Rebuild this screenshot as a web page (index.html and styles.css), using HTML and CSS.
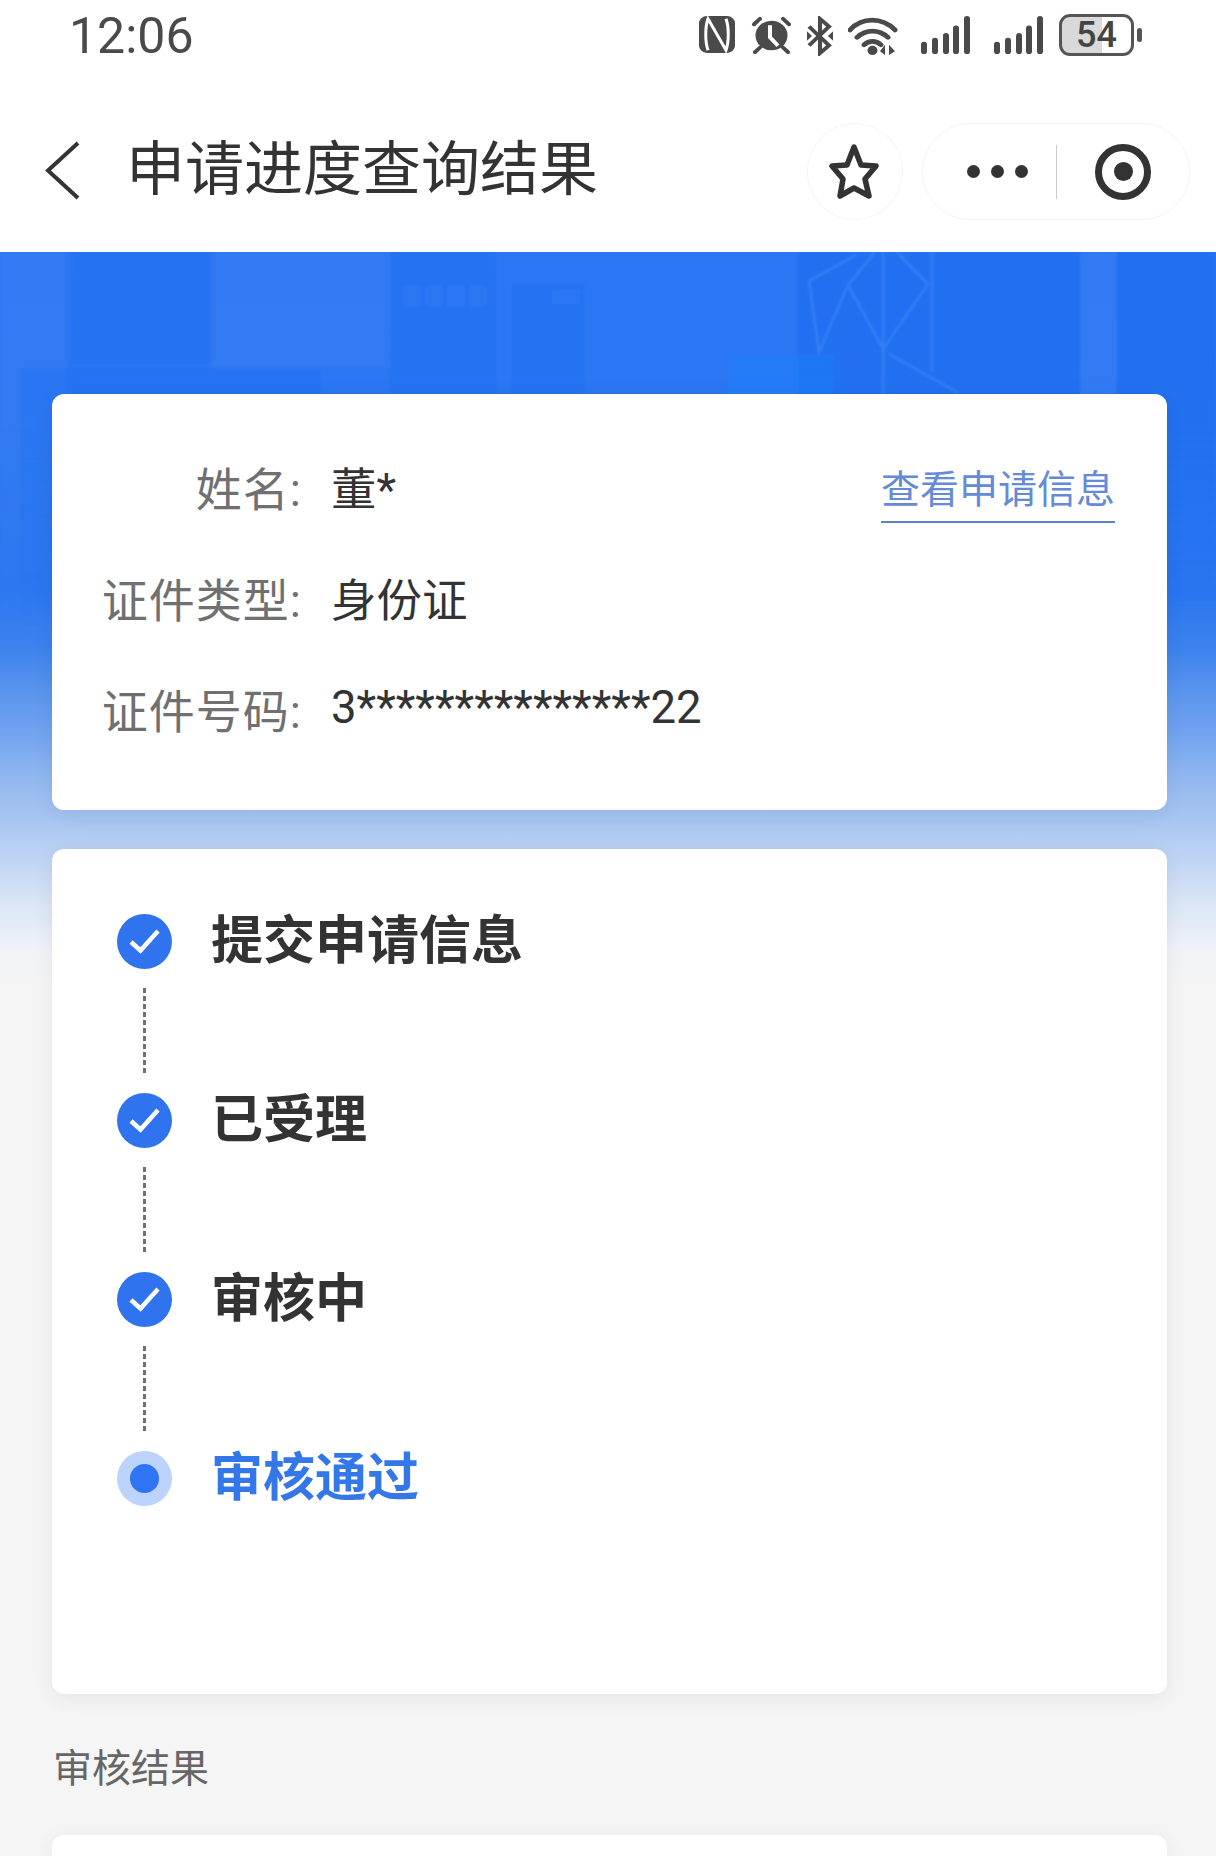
FILE: index.html
```html
<!DOCTYPE html>
<html lang="zh">
<head>
	<meta charset="utf-8" />
	<title>申请进度查询结果</title>
	<link rel="stylesheet" href="styles.css">
</head>
<body>
<div class="status">
	<span class="time">12:06</span>
	<div class="status-icons">
		<svg class="i-nfc" width="36" height="37" viewBox="0 0 36 40" preserveAspectRatio="none"><rect width="36" height="40" rx="8" fill="#4a4a4a"/><path d="M9 37C6 28 6 12 9 3L27 37C30 28 30 12 27 3" fill="none" stroke="#fff" stroke-width="3"/></svg>
		<svg class="i-alarm" width="41" height="38" viewBox="0 0 41 41" preserveAspectRatio="none"><circle cx="20.500" cy="21" r="16" fill="#4a4a4a"/><path d="M19 10V23L27 32" fill="none" stroke="#fff" stroke-width="4"/><path d="M3 9L9 3M38 9L32 3M9 34L4 39M32 34L37 39" stroke="#4a4a4a" stroke-width="4" stroke-linecap="round"/></svg>
		<svg class="i-bt" width="28" height="40" viewBox="0 0 28 42" preserveAspectRatio="none"><path d="M3 11L23 31L14 39V3L23 11L3 31" fill="none" stroke="#4a4a4a" stroke-width="4"/><path d="M1 16L6 21L1 26ZM27 16L22 21L27 26Z" fill="#4a4a4a"/></svg>
		<svg class="i-wifi" width="50" height="40" viewBox="0 0 50 43" preserveAspectRatio="none"><path d="M2 15C14 1 34 1 47 15M9 23C18 14 31 14 40 23M16 31C21 26 28 26 33 31" fill="none" stroke="#4a4a4a" stroke-width="5" stroke-linecap="round"/><circle cx="24.500" cy="37" r="5" fill="#4a4a4a"/><path d="M37 31V42L32 38ZM41 31V42L47 38Z" fill="#4a4a4a"/></svg>
		<svg class="i-signal" width="49" height="38" viewBox="0 0 49 40" preserveAspectRatio="none"><g fill="#4a4a4a"><rect x="0" y="27" width="6" height="13" rx="3"/><rect x="11" y="23" width="6" height="17" rx="3"/><rect x="22" y="18" width="6" height="22" rx="3"/><rect x="32" y="10" width="6" height="30" rx="3"/><rect x="43" y="0" width="6" height="40" rx="3"/></g></svg>
		<svg class="i-signal" width="49" height="38" viewBox="0 0 49 40" preserveAspectRatio="none"><g fill="#4a4a4a"><rect x="0" y="27" width="6" height="13" rx="3"/><rect x="11" y="23" width="6" height="17" rx="3"/><rect x="22" y="18" width="6" height="22" rx="3"/><rect x="32" y="10" width="6" height="30" rx="3"/><rect x="43" y="0" width="6" height="40" rx="3"/></g></svg>
		<div class="battery"><span>54</span></div>
	</div>
</div>

<div class="nav">
	<svg class="back" width="36" height="59" viewBox="0 0 36 59"><path d="M34 2L4 29.500L34 57" fill="none" stroke="#333" stroke-width="4"/></svg>
	<h1 class="title">申请进度查询结果</h1>
	<div class="nav-btns">
		<div class="fav">
			<svg width="60" height="64" viewBox="0 0 60 64"><path d="M29 7L36 25L51 26L40 39L44 56L29 48L15 56L18 39L7 26L22 25Z" fill="none" stroke="#333" stroke-width="5.500" stroke-linejoin="round"/></svg>
		</div>
		<div class="capsule">
			<div class="dots"><i></i><i></i><i></i></div>
			<div class="line"></div>
			<div class="target"><i></i></div>
		</div>
	</div>
</div>

<div class="main">
	<!-- 背景建筑 -->
	<svg class="deco" width="1216" height="400" viewBox="0 0 1216 400">
		<g fill="#fff" fill-opacity=".03">
			<rect x="0" y="0" width="66" height="400"/>
			<rect x="212" y="0" width="178" height="116"/>
			<rect x="403" y="33" width="18" height="22" rx="4"/>
			<rect x="425" y="33" width="18" height="22" rx="4"/>
			<rect x="447" y="33" width="18" height="22" rx="4"/>
			<rect x="469" y="33" width="18" height="22" rx="4"/>
			<rect x="552" y="38" width="28" height="14"/>
			<rect x="1081" y="0" width="36" height="400"/>
		</g>
		<g fill="#0a62f0" fill-opacity=".14">
			<rect x="72" y="0" width="138" height="112"/>
			<rect x="20" y="116" width="300" height="284"/>
			<rect x="390" y="0" width="106" height="400"/>
			<rect x="512" y="32" width="72" height="368"/>
		</g>
		<g fill="#0a62f0" fill-opacity=".3">
			<rect x="798" y="0" width="136" height="400"/>
			<rect x="934" y="0" width="146" height="400"/>
			<rect x="1117" y="0" width="99" height="400"/>
		</g>
		<rect x="728" y="103" width="105" height="39" fill="#1a86ff" fill-opacity=".35"/>
		<path d="M809 29L856 3M848 33L875 0M848 33L883 97M809 29L819 100L848 33M928 32L897 0M928 32L883 97M883 0V142M932 0V120M889 102L957 140" fill="none" stroke="#5a9bff" stroke-opacity=".32" stroke-width="3"/>
	</svg>

	<div class="card info">
		<div class="row">
			<span class="label">姓名:</span>
			<span class="val">董*</span>
			<a class="link" href="#">查看申请信息</a>
		</div>
		<div class="row">
			<span class="label">证件类型:</span>
			<span class="val">身份证</span>
		</div>
		<div class="row">
			<span class="label">证件号码:</span>
			<span class="val">3***************22</span>
		</div>
	</div>

	<div class="card steps">
		<div class="step">
			<svg class="dot" width="55" height="55" viewBox="0 0 55 55"><circle cx="27.500" cy="27.500" r="27.500" fill="#2f74ee"/><path d="M14 28L23.500 36.500L41 17" fill="none" stroke="#fff" stroke-width="4.500"/></svg>
			<span>提交申请信息</span>
		</div>
		<div class="dash"></div>
		<div class="step">
			<svg class="dot" width="55" height="55" viewBox="0 0 55 55"><circle cx="27.500" cy="27.500" r="27.500" fill="#2f74ee"/><path d="M14 28L23.500 36.500L41 17" fill="none" stroke="#fff" stroke-width="4.500"/></svg>
			<span>已受理</span>
		</div>
		<div class="dash"></div>
		<div class="step">
			<svg class="dot" width="55" height="55" viewBox="0 0 55 55"><circle cx="27.500" cy="27.500" r="27.500" fill="#2f74ee"/><path d="M14 28L23.500 36.500L41 17" fill="none" stroke="#fff" stroke-width="4.500"/></svg>
			<span>审核中</span>
		</div>
		<div class="dash"></div>
		<div class="step current">
			<div class="dot now"><i></i></div>
			<span>审核通过</span>
		</div>
	</div>

	<div class="sec-title">审核结果</div>
	<div class="card result"></div>
</div>
</body>
</html>
```

FILE: styles.css
```css
*{
margin:0;
padding:0;
box-sizing:border-box;
}
html,body{
width:1216px;
height:1856px;
overflow:hidden;
}
body{
background:#f5f5f5;
color:#333;
font-family:Roboto,"Noto Sans CJK SC",sans-serif;
}

/* 状态栏 */
.status{
height:80px;
background:#fff;
display:flex;
align-items:flex-start;
padding-left:69px;
}
.time{
font-size:50px;
line-height:72px;
color:#4a4a4a;
}
.status-icons{
margin-left:auto;
margin-right:82px;
margin-top:15px;
display:flex;
align-items:flex-start;
}
.status-icons svg{
display:block;
margin-top:1px;
}
.i-alarm{margin-left:16px;}
.i-bt{margin-left:14px;}
.i-wifi{margin-left:14px;}
.i-signal{margin-left:23px;}
.i-signal + .i-signal{margin-left:24px;}
.battery{
width:75px;
height:42px;
margin-left:16px;
margin-top:-1px;
border:3px solid #555;
border-radius:11px;
background:linear-gradient(to right,#d9d9d9 58%,#fff 58%);
position:relative;
display:flex;
align-items:center;
justify-content:center;
font-size:36px;
font-weight:500;
line-height:36px;
color:#444;
}
.battery:after{
content:"";
position:absolute;
right:-11px;
top:11px;
width:5px;
height:14px;
border-radius:3px;
background:#555;
}

/* 导航 */
.nav{
height:172px;
background:#fff;
display:flex;
align-items:flex-start;
padding-left:44px;
padding-right:26px;
}
.back{
margin-top:61px;
}
.title{
font-size:59px;
font-weight:400;
line-height:80px;
margin-left:46px;
margin-top:50px;
color:#333;
white-space:nowrap;
}
.nav-btns{
margin-left:auto;
margin-top:43px;
display:flex;
gap:19px;
}
.fav{
width:96px;
height:97px;
border:1px solid #f4f4f4;
border-radius:50%;
display:flex;
align-items:center;
justify-content:center;
}
.capsule{
width:268px;
height:97px;
border:1px solid #f4f4f4;
border-radius:49px;
display:flex;
align-items:center;
padding-left:44px;
}
.dots{
display:flex;
gap:11px;
}
.dots i{
width:13px;
height:13px;
border-radius:50%;
background:#333;
}
.line{
width:1px;
height:54px;
background:#ccc;
margin-left:28px;
}
.target{
width:56px;
height:56px;
margin-left:38px;
border:7px solid #333;
border-radius:50%;
display:flex;
align-items:center;
justify-content:center;
}
.target i{
width:19px;
height:19px;
border-radius:50%;
background:#333;
}

/* 内容 */
.main{
position:relative;
height:1604px;
overflow:hidden;
padding:142px 49px 0 52px;
background:linear-gradient(to bottom,#2b76f4 0,#2c77f0 340px,#3f84ee 400px,#5d97ed 445px,#73a4f0 484px,#90b7f0 523px,#a8c6f2 570px,#dae5f6 650px,#f1f3f8 700px,#f5f5f5 740px);
}
.deco{
position:absolute;
left:0;
top:0;
filter:blur(1px);
-webkit-mask-image:linear-gradient(to bottom,#000 0,#000 40%,transparent 100%);
mask-image:linear-gradient(to bottom,#000 0,#000 40%,transparent 100%);
}
.card{
position:relative;
background:#fff;
border-radius:12px;
box-shadow:0 4px 20px rgba(0,0,0,.07);
}
.info{
height:416px;
padding-top:36px;
}
.row{
height:111px;
display:flex;
align-items:center;
font-size:46px;
}
.label{
width:250px;
text-align:right;
letter-spacing:1px;
color:#707070;
}
.val{
margin-left:29px;
font-size:45.500px;
color:#333;
}
.link{
margin-left:auto;
margin-right:52px;
font-size:39px;
line-height:50px;
padding-bottom:6px;
margin-top:16px;
color:#648ad8;
text-decoration:none;
border-bottom:2px solid #5b82d0;
}
.steps{
height:845px;
padding:65px 0 0 65px;
margin-top:39px;
}
.step{
height:55px;
display:flex;
align-items:center;
font-size:52px;
font-weight:700;
color:#333;
}
.step span{
margin-bottom:10px;
}
.dot{
flex:none;
margin-right:39px;
}
.dash{
width:3px;
height:85px;
margin:19px 0 20px 26px;
background:repeating-linear-gradient(to bottom,#707070 0,#707070 5px,transparent 5px,transparent 8px);
}
.now{
width:55px;
height:55px;
border-radius:50%;
background:#bcd3fb;
display:flex;
align-items:center;
justify-content:center;
}
.now i{
width:29px;
height:29px;
border-radius:50%;
background:#2f74f3;
}
.current{
color:#3477e8;
}
.sec-title{
height:141px;
padding:50px 0 0 1px;
font-size:39px;
line-height:50px;
color:#666;
}
.result{
height:21px;
border-radius:12px 12px 0 0;
}
```
